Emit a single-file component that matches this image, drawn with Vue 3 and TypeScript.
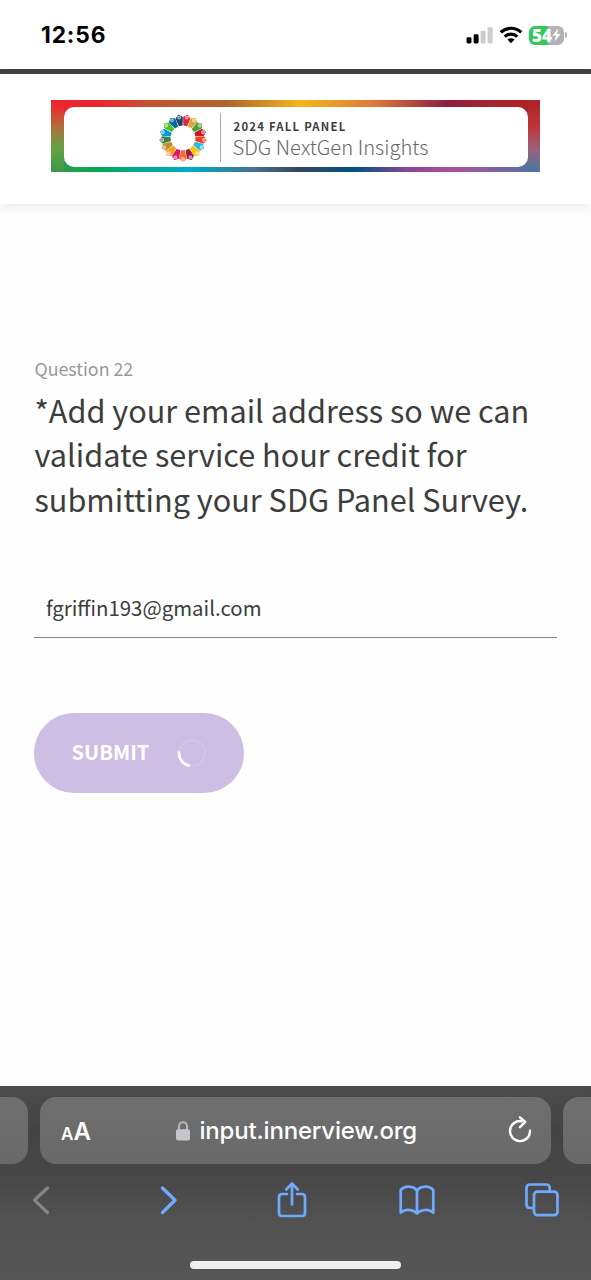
<script setup lang="ts">
const goalColors: string[] = [
  '#e5243b', '#dda63a', '#4c9f38', '#c5192d', '#ff3a21', '#26bde2', '#fcc30b', '#a21942', '#fd6925',
  '#dd1367', '#fd9d24', '#bf8b2e', '#3f7e44', '#0a97d9', '#56c02b', '#00689d', '#19486a',
]

const step = 360 / goalColors.length
const segments = goalColors.map((color, i) => ({ color, angle: (i + 0.5) * step }))
const email = 'fgriffin193@gmail.com'
</script>

<template>
  <div class="screen">
    <div class="status">
      <span class="clock">12:56</span>
      <div class="indicators">
        <svg class="signal" width="28" height="18" viewBox="0 0 28 18">
          <rect x="0.5" y="11.3" width="5" height="6.2" rx="1.4" />
          <rect x="7.6" y="8.3" width="5" height="9.2" rx="1.4" />
          <rect class="off" x="14.6" y="4.8" width="5" height="12.7" rx="1.4" />
          <rect class="off" x="21.6" y="1.2" width="5" height="16.3" rx="1.4" />
        </svg>
        <svg class="wifi" width="24" height="18" viewBox="0 0 24 18">
          <path d="M1.8 6.4A14.6 14.6 0 0 1 22.2 6.4M5.7 10.6A9.2 9.2 0 0 1 18.3 10.6" />
          <path class="dot" d="M8.4 13.5Q12 11 15.6 13.5L12 17.3Z" />
        </svg>
        <div class="battery">
          <span>54</span>
          <svg width="9" height="14" viewBox="0 0 9 14"><path d="M6.2 0.5 0.3 7.7H4L2.6 13.3 8.7 5.9H5Z" /></svg>
        </div>
        <i class="nub"></i>
      </div>
    </div>
    <header class="header">
      <div class="banner">
        <div class="card">
          <svg class="wheel" width="50" height="50" viewBox="-25 -25 50 50">
            <g v-for="s in segments" :key="s.angle" :transform="`rotate(${s.angle})`">
              <path :fill="s.color" d="M-1.9 -12.3-3.7 -20.2Q-3.4 -21.8-1.9 -22Q-1.2 -23.6 0 -23.6Q1.2 -23.6 1.9 -22Q3.4 -21.8 3.7 -20.2L1.9 -12.3Z" />
              <circle cx="0" cy="-20.9" r="1.5" />
            </g>
          </svg>
          <i class="rule"></i>
          <div class="titles">
            <div class="edition">2024 FALL PANEL</div>
            <div class="brand">SDG NextGen Insights</div>
          </div>
        </div>
      </div>
    </header>
    <main class="main">
      <div class="number">Question 22</div>
      <h1 class="question">
        <span>*Add your email address so we can</span>
        <span>validate service hour credit for</span>
        <span>submitting your SDG Panel Survey.</span>
      </h1>
      <div class="field">{{ email }}</div>
      <button class="submit" type="button">
        <span>SUBMIT</span>
        <svg width="30" height="30" viewBox="-15 -15 30 30">
          <circle r="13" />
          <path d="M-12.9 -1.6A13 13 0 0 0 -2.2 12.8" />
        </svg>
      </button>
    </main>
    <footer class="browser">
      <div class="tabs">
        <div class="tab edge left"></div>
        <div class="tab address">
          <div class="sizes"><small>A</small><span>A</span></div>
          <div class="site">
            <svg width="14" height="20" viewBox="0 0 14 20">
              <path class="shackle" d="M3 9V5.3a4 4 0 0 1 8 0V9" />
              <rect x="0" y="8.3" width="14" height="11.2" rx="2" />
            </svg>
            <span>input.innerview.org</span>
          </div>
          <svg class="reload" width="24" height="28" viewBox="0 0 24 28">
            <path d="M13.5 5.2A10 10 0 1 0 22 14.8M12 1.3 17.2 5.9 12 11.2" />
          </svg>
        </div>
        <div class="tab edge right"></div>
      </div>
      <nav class="tools">
        <svg class="back" width="18" height="30" viewBox="0 0 18 30"><path d="M15.5 3 2.5 15.2 15.5 27.5" /></svg>
        <svg class="forward" width="18" height="30" viewBox="0 0 18 30"><path d="M2.5 3 15 15.2 2.5 27.5" /></svg>
        <svg class="share" width="30" height="36" viewBox="0 0 30 36">
          <path d="M10 12H5Q2 12 2 15V31Q2 34 5 34H25Q28 34 28 31V15Q28 12 25 12H20M15 22.5V1.8M9.3 7.5 15 1.5 20.7 7.5" />
        </svg>
        <svg class="book" width="36" height="30" viewBox="0 0 36 30">
          <path d="M18 6V28.5C14.5 24.2 6.2 23.7 1.7 27.7V5.2C5.5 0.4 14.5.4 18 6C21.5.4 30.5.4 34.3 5.2V27.7C29.8 23.7 21.5 24.2 18 28.5" />
        </svg>
        <svg class="pages" width="34" height="34" viewBox="0 0 34 34">
          <rect x="9" y="8.7" width="23.5" height="23.5" rx="3.5" />
          <path d="M8.7 25H5Q1.5 25 1.5 21.5V5Q1.5 1.5 5 1.5H21.2Q24.7 1.5 24.7 5V8.5" />
        </svg>
      </nav>
      <div class="home"></div>
    </footer>
  </div>
</template>

<style>
html, body { margin: 0; background: #fefefe; }
</style>

<style scoped>
.screen {
  width: 591px;
  height: 1280px;
  overflow: hidden;
  display: flex;
  flex-direction: column;
  background: #fefefe;
  font-family: "Noto Sans CJK SC", "Noto Sans", sans-serif;
  color: #3d3d3d;
}
.screen svg { display: block; flex: none; fill: none; }
.status {
  box-sizing: border-box;
  height: 74px;
  flex: none;
  padding: 0 24px 3px 41px;
  border-bottom: 5.5px solid #424242;
  background: #fff;
  display: flex;
  align-items: center;
  justify-content: space-between;
}
.clock { font: 700 22.7px/30px Inter, sans-serif; color: #000; letter-spacing: .9px; padding-top: 4px; }
.indicators { display: flex; align-items: center; padding-top: 4px; }
.signal rect { fill: #000; }
.signal .off { fill: #ccc; }
.signal { margin-right: 5px; }
.wifi path { stroke: #000; stroke-width: 3.2; }
.wifi .dot { fill: #000; stroke: none; }
.battery {
  width: 35px;
  height: 19px;
  margin-left: 6px;
  border-radius: 6px;
  background: linear-gradient(90deg, #34c759 54%, #b3b3b3 54%);
  display: flex;
  align-items: center;
  justify-content: center;
  font: 800 17px/19px "Open Sans", sans-serif;
  letter-spacing: .1px;
  color: #fff;
}
.battery path { fill: #fff; }
.nub { width: 2px; height: 6px; margin-left: 1px; border-radius: 0 2px 2px 0; background: #b3b3b3; }
.header {
  height: 130px;
  flex: none;
  box-sizing: border-box;
  padding: 26px 51px 0;
  background: #fff;
  box-shadow: 0 3px 10px rgba(0, 0, 0, .08);
}
.banner {
  box-sizing: border-box;
  height: 72px;
  padding: 7px 12px 5px 13px;
  background:
    linear-gradient(180deg, #e8252f 0%, #e8302f 12%, #a87539 40%, #68a044 65%, #3b9b48 100%) left / 13px 100% no-repeat,
    linear-gradient(180deg, #ad2428 0%, #bd3539 38%, #9b6279 68%, #4777a6 100%) right / 12px 100% no-repeat,
    linear-gradient(90deg, #e8252f 0%, #eb252f 10%, #c75231 20%, #ad642c 36%, #f5b51c 51%, #df783b 66%, #8b1e42 81%, #ad2428 93%) top / 100% 50% no-repeat,
    linear-gradient(90deg, #3b9b48 0%, #00a854 10%, #00aaa0 20%, #00abcb 29%, #456e8b 42%, #35465e 51%, #005189 62%, #8b4697 73%, #aa529c 83%, #4777a6 100%) bottom / 100% 50% no-repeat;
}
.card {
  box-sizing: border-box;
  height: 60px;
  padding-left: 93.5px;
  border-radius: 10px;
  background: #fff;
  display: flex;
  align-items: center;
}
.wheel { position: relative; top: 1px; }
.wheel circle { fill: #fff; fill-opacity: .35; stroke: #fff; stroke-opacity: .55; stroke-width: 1; }
.rule { width: 1.5px; height: 49px; margin-left: 12px; background: #aaa; }
.titles { padding: 2px 0 0 11.5px; white-space: nowrap; }
.edition { font-size: 11.3px; font-weight: 700; line-height: 17px; letter-spacing: 1.25px; padding-left: 1px; }
.brand { font-size: 20.2px; font-weight: 300; line-height: 24px; color: #666; }
.main { flex: 1; padding: 151px 34px 0; }
.number { font-size: 17.8px; line-height: 26px; color: #999; padding-left: .5px; }
.question { margin: 6.5px 0 0; font-size: 30.65px; font-weight: 400; line-height: 44.5px; padding-left: .5px; }
.question span { display: block; white-space: nowrap; }
.field {
  box-sizing: border-box;
  width: 523px;
  height: 60.5px;
  margin-top: 56.5px;
  padding: 14.5px 12px 0;
  border-bottom: 1.5px solid #858585;
  font-size: 20.4px;
  line-height: 30px;
}
.submit {
  width: 210px;
  height: 80px;
  margin-top: 75px;
  padding: 0 37px 0 37.5px;
  border: 0;
  border-radius: 40px;
  background: #cdbfe3;
  color: #fff;
  font: 700 20.2px/30px "Noto Sans CJK SC", sans-serif;
  display: flex;
  align-items: center;
  justify-content: space-between;
}
.submit span { padding-bottom: 2px; }
.submit svg circle { stroke: #d2c5e6; stroke-width: 2; }
.submit svg path { stroke: #fff; stroke-width: 2.7; }
.browser {
  height: 194px;
  flex: none;
  background: linear-gradient(180deg, #4c4c4c 0, #434343 45px, #484848 95px, #535353 140px, #565656 100%);
}
.tabs { display: flex; gap: 12px; padding-top: 11px; }
.tab { box-sizing: border-box; height: 67px; border-radius: 16px; background: linear-gradient(#6f6f6f, #696969); }
.left { width: 28px; border-radius: 0 16px 16px 0; }
.right { width: 28px; border-radius: 16px 0 0 16px; }
.address {
  width: 511px;
  padding: 0 19px 0 21px;
  display: flex;
  align-items: center;
  justify-content: space-between;
  color: #fff;
  font-family: Inter, sans-serif;
  font-weight: 500;
}
.sizes { width: 34px; display: flex; align-items: baseline; font-size: 24px; line-height: 30px; padding-top: 4px; font-weight: 600; }
.sizes small { font-size: 17px; }
.site { display: flex; align-items: center; gap: 9.5px; font-size: 24px; line-height: 30px; letter-spacing: -.18px; margin-left: -10px; }
.site span { padding-top: 1px; }
.site rect { fill: #c5c5cc; }
.site .shackle { stroke: #b8b8bf; stroke-width: 2; }
.reload { margin-bottom: 2px; }
.reload path { stroke: #fff; stroke-width: 2.4; stroke-linecap: round; stroke-linejoin: round; }
.tools { height: 72px; display: flex; align-items: center; padding: 0 32px; }
.tools path, .tools rect { stroke: #6faaff; stroke-width: 2.7; stroke-linecap: round; stroke-linejoin: round; }
.tools .back path { stroke: #858585; stroke-width: 3.2; }
.tools .forward path { stroke-width: 3.4; }
.forward { margin-left: 110px; }
.share { margin-left: 99px; }
.book { margin-left: 92px; }
.pages { margin-left: 90px; }
.home { width: 211px; height: 8px; margin: 25px auto 0; border-radius: 4px; background: #eee; }
</style>
